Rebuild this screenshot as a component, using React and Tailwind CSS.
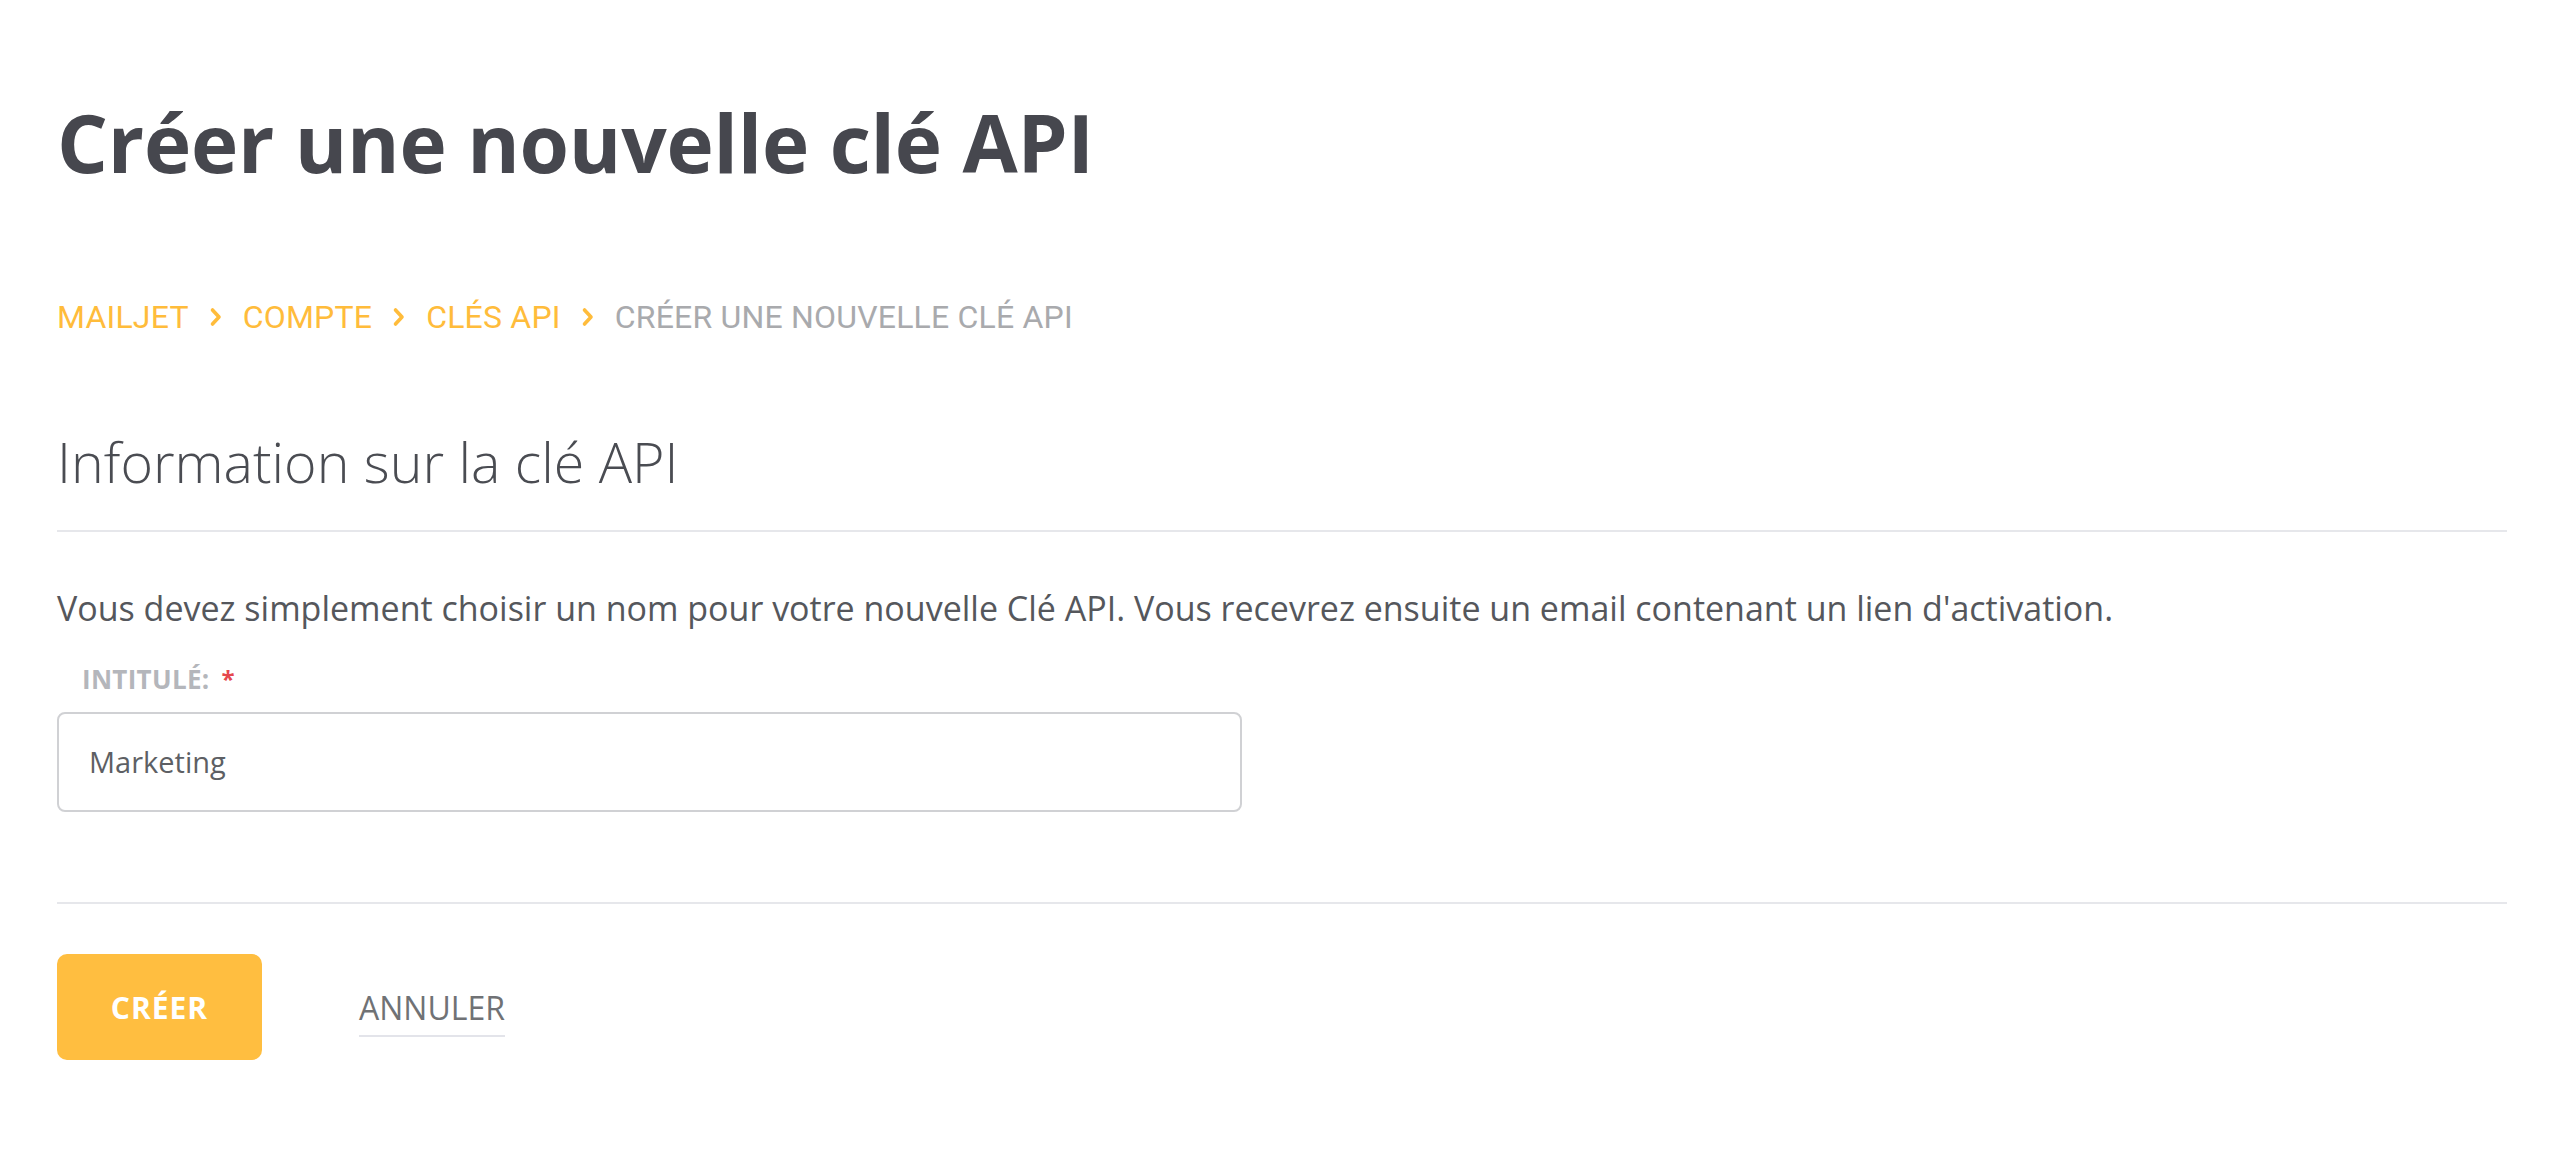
import React from "react";

const Chevron = () => (
  <svg width="14" height="20" viewBox="0 0 14 20" className="shrink-0">
    <path d="M3.5 3 L10 10 L3.5 17" fill="none" stroke="#FFBC3B" strokeWidth="3.6" strokeLinecap="round" strokeLinejoin="round" />
  </svg>
);

export default function App() {
  const body = { fontFamily: '"Open Sans", "Noto Sans", sans-serif' };
  return (
    <div className="min-h-[1168px] w-full bg-white pl-[57px] pr-[53px]" style={body}>
      <h1
        className="pt-[102px] text-[80px] leading-[80px] font-bold text-[#46474e] tracking-[-0.2px]"
        style={{ fontFamily: '"Open Sans", sans-serif' }}
      >
        Créer une nouvelle clé API
      </h1>

      <nav
        className="mt-[119px] flex items-center gap-[20px] text-[32px] leading-[32px] uppercase tracking-[0.2px]"
        style={{ fontFamily: 'Roboto, "Liberation Sans", sans-serif' }}
      >
        <span className="text-[#FFBC3B]">MAILJET</span>
        <Chevron />
        <span className="text-[#FFBC3B]">COMPTE</span>
        <Chevron />
        <span className="text-[#FFBC3B]">CLÉS API</span>
        <Chevron />
        <span className="text-[#a9aaad]">CRÉER UNE NOUVELLE CLÉ API</span>
      </nav>

      <h2 className="mt-[101px] text-[55.5px] leading-[56px] font-light text-[#4a4c52]">
        Information sur la clé API
      </h2>

      <div className="mt-[40px] h-[2px] w-full bg-[#e6e7eb]" />

      <p className="mt-[56px] text-[34px] leading-[40px] text-[#55575c]">
        Vous devez simplement choisir un nom pour votre nouvelle Clé API. Vous recevrez ensuite un email contenant un lien d'activation.
      </p>

      <div className="mt-[38px] pl-[25px] flex items-center gap-[12px] text-[26px] leading-[26px] font-bold">
        <span className="text-[#b4b6bb] tracking-[0.3px]">INTITULÉ:</span>
        <span className="text-[#e5484d] text-[24px]">*</span>
      </div>

      <div className="mt-[20px] w-[1185px] h-[100px] rounded-[8px] border-2 border-[#d0d1d4] flex items-center pl-[30px] bg-white">
        <span className="text-[29px] text-[#5d5f64]">Marketing</span>
      </div>

      <div className="mt-[90px] h-[2px] w-full bg-[#e6e7eb]" />

      <div className="mt-[50px] flex items-center">
        <button className="w-[205px] h-[106px] rounded-[10px] bg-[#FFBE40] text-white font-bold text-[30px] tracking-[1px] flex items-center justify-center">
          CRÉER
        </button>
        <div className="ml-[97px] flex flex-col pt-[14px]">
          <span className="text-[32px] leading-[34px] text-[#707275]">ANNULER</span>
          <div className="mt-[10px] h-[2px] w-full bg-[#e3e4ea]" />
        </div>
      </div>
    </div>
  );
}
